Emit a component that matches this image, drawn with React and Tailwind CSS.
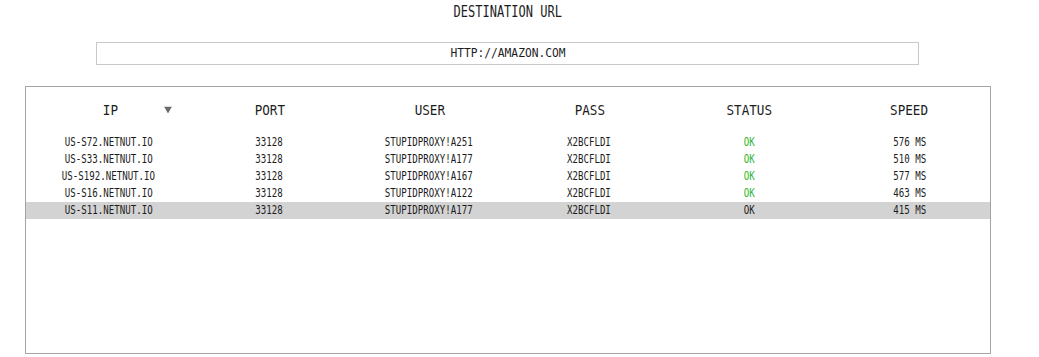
import React from 'react';

const rows = [
  { ip: 'US-S72.NETNUT.IO', port: '33128', user: 'STUPIDPROXY!A251', pass: 'X2BCFLDI', status: 'OK', speed: '576 MS' },
  { ip: 'US-S33.NETNUT.IO', port: '33128', user: 'STUPIDPROXY!A177', pass: 'X2BCFLDI', status: 'OK', speed: '510 MS' },
  { ip: 'US-S192.NETNUT.IO', port: '33128', user: 'STUPIDPROXY!A167', pass: 'X2BCFLDI', status: 'OK', speed: '577 MS' },
  { ip: 'US-S16.NETNUT.IO', port: '33128', user: 'STUPIDPROXY!A122', pass: 'X2BCFLDI', status: 'OK', speed: '463 MS' },
  { ip: 'US-S11.NETNUT.IO', port: '33128', user: 'STUPIDPROXY!A177', pass: 'X2BCFLDI', status: 'OK', speed: '415 MS', selected: true },
];

const columns = ['IP', 'PORT', 'USER', 'PASS', 'STATUS', 'SPEED'];

// condensed text: mono glyphs squeezed horizontally
function Narrow({ children, className = '' }) {
  return <span className={`inline-block whitespace-nowrap ${className}`}>{children}</span>;
}

function App() {
  return (
    <div className="w-[1039px] h-[357px] bg-white text-[#1c1c1c] overflow-hidden font-['DejaVu_Sans_Mono',monospace]">
      <div className="w-[1015px] flex flex-col items-center">
        {/* title */}
        <div className="pt-[3px] h-[42px] text-[15px] leading-[18px]">
          <Narrow className="scale-x-[0.8]">DESTINATION URL</Narrow>
        </div>

        {/* url input */}
        <div className="w-[823px] h-[23px] border border-[#c8c8c8] flex items-center justify-center text-[12.5px] leading-none">
          <Narrow className="scale-x-[0.9]">HTTP://AMAZON.COM</Narrow>
        </div>

        {/* proxy table */}
        <div className="mt-[21px] w-[966px] h-[268px] border border-[#a4a4a4]">
          <div className="grid grid-cols-6 h-[47px] items-center pl-[5px] text-[14px] leading-none">
            {columns.map((c) => (
              <div key={c} className="relative text-center -translate-y-[1px]">
                <Narrow className="scale-x-[0.9]">{c}</Narrow>
                {c === 'IP' && (
                  <svg className="absolute right-[18px] top-1/2 -translate-y-1/2" width="8" height="7" viewBox="0 0 8 7">
                    <path d="M0 0H8L4 7Z" fill="#6b6b6b" />
                  </svg>
                )}
              </div>
            ))}
          </div>
          {rows.map((r, i) => (
            <div
              key={i}
              className={`grid grid-cols-6 h-[17px] items-center pl-[3px] text-[12px] leading-none ${r.selected ? 'bg-[#d3d3d3]' : ''}`}
            >
              <div className="text-center -translate-y-[1px]"><Narrow className="scale-x-[0.76]">{r.ip}</Narrow></div>
              <div className="text-center -translate-y-[1px]"><Narrow className="scale-x-[0.76]">{r.port}</Narrow></div>
              <div className="text-center -translate-y-[1px]"><Narrow className="scale-x-[0.76]">{r.user}</Narrow></div>
              <div className="text-center -translate-y-[1px]"><Narrow className="scale-x-[0.76]">{r.pass}</Narrow></div>
              <div className={`text-center -translate-y-[1px] ${r.selected ? '' : 'text-[#2fb52f]'}`}>
                <Narrow className="scale-x-[0.76]">{r.status}</Narrow>
              </div>
              <div className="text-center -translate-y-[1px]"><Narrow className="scale-x-[0.76]">{r.speed}</Narrow></div>
            </div>
          ))}
        </div>
      </div>
    </div>
  );
}

export default App;
